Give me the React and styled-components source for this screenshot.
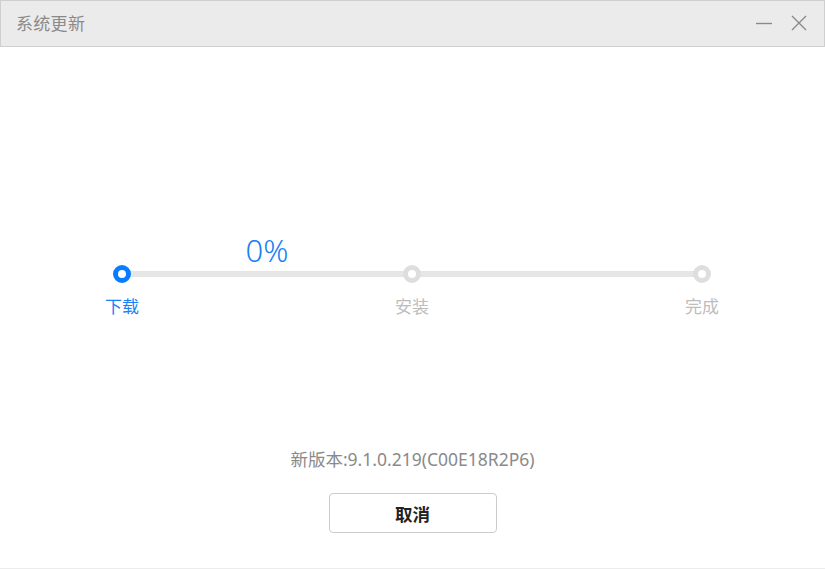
import React from "react";
import styled, { createGlobalStyle } from "styled-components";

const GlobalStyle = createGlobalStyle`
  html, body {
    margin: 0;
    padding: 0;
    background: #fff;
  }
  body {
    font-family: "Noto Sans", "Noto Sans CJK SC", sans-serif;
  }
`;

const steps = [
  { label: "下载", active: true },
  { label: "安装", active: false },
  { label: "完成", active: false },
];

const App = () => {
  return (
    <>
      <GlobalStyle />
      <Window>
        <TitleBar>
          <Title>系统更新</Title>
          <WindowControls>
            <ControlButton aria-label="minimize">
              <svg width="18" height="18" viewBox="0 0 18 18">
                <line x1="1" y1="9.5" x2="17" y2="9.5" stroke="#8a8a8a" strokeWidth="1.4" />
              </svg>
            </ControlButton>
            <ControlButton aria-label="close">
              <svg width="18" height="18" viewBox="0 0 18 18">
                <path d="M2 2 L16 16 M16 2 L2 16" stroke="#8a8a8a" strokeWidth="1.4" fill="none" />
              </svg>
            </ControlButton>
          </WindowControls>
        </TitleBar>

        <Body>
          <Stepper>
            <PercentRow>
              <Percent>0%</Percent>
            </PercentRow>
            <Track>
              {steps.map((s) => (
                <Dot key={s.label} active={s.active} />
              ))}
            </Track>
            <LabelRow>
              {steps.map((s) => (
                <StepLabel key={s.label} active={s.active}>
                  <span>{s.label}</span>
                </StepLabel>
              ))}
            </LabelRow>
          </Stepper>

          <Footer>
            <Version>新版本:9.1.0.219(C00E18R2P6)</Version>
            <CancelButton>取消</CancelButton>
          </Footer>
        </Body>
      </Window>
    </>
  );
};

const Window = styled.div`
  width: 825px;
  height: 569px;
  display: flex;
  flex-direction: column;
  background: #fff;
  box-sizing: border-box;
  border-bottom: 1px solid #ececec;
`;

const TitleBar = styled.div`
  height: 47px;
  box-sizing: border-box;
  border: 1px solid #cfcfcf;
  background: #ebebeb;
  display: flex;
  align-items: center;
  justify-content: space-between;
  padding: 0 16px 0 15px;
`;

const Title = styled.div`
  font-size: 17px;
  color: #8a8a8a;
  letter-spacing: 0.3px;
  margin-top: -2px;
`;

const WindowControls = styled.div`
  display: flex;
  align-items: center;
  gap: 17px;
  margin-top: -2px;
`;

const ControlButton = styled.div`
  width: 18px;
  height: 18px;
  display: flex;
  align-items: center;
  justify-content: center;
`;

const Body = styled.div`
  flex: 1;
  display: flex;
  flex-direction: column;
  align-items: center;
`;

const Stepper = styled.div`
  width: 598px;
  margin-top: 186px;
  margin-left: -1px;
`;

const PercentRow = styled.div`
  padding-left: 9px;
  height: 32px;
`;

const Percent = styled.div`
  width: 290px;
  text-align: center;
  font-size: 31px;
  line-height: 34px;
  color: #1a7ff5;
  font-weight: 300;
`;

const Track = styled.div`
  height: 18px;
  display: flex;
  justify-content: space-between;
  align-items: center;
  background: linear-gradient(#e6e6e6, #e6e6e6) no-repeat center / calc(100% - 18px) 6px;
`;

const Dot = styled.div`
  width: 18px;
  height: 18px;
  box-sizing: border-box;
  border-radius: 50%;
  background: #fff;
  border: 5px solid ${(p) => (p.active ? "#0a7cff" : "#dedede")};
`;

const LabelRow = styled.div`
  margin-top: 14px;
  display: flex;
  justify-content: space-between;
`;

const StepLabel = styled.div`
  width: 18px;
  display: flex;
  justify-content: center;
  white-space: nowrap;
  font-size: 17px;
  line-height: 20px;
  color: ${(p) => (p.active ? "#1a7ff5" : "#bdbdbd")};
`;

const Footer = styled.div`
  margin-top: 131px;
  display: flex;
  flex-direction: column;
  align-items: center;
`;

const Version = styled.div`
  font-size: 17.5px;
  line-height: 22px;
  color: #8a8a8a;
`;

const CancelButton = styled.button`
  margin-top: 23px;
  width: 168px;
  height: 40px;
  box-sizing: border-box;
  border: 1px solid #cccccc;
  border-radius: 4px;
  background: #fff;
  font-family: "Noto Sans CJK SC", sans-serif;
  font-size: 17.5px;
  font-weight: 700;
  color: #222;
  cursor: pointer;
`;

export default App;
